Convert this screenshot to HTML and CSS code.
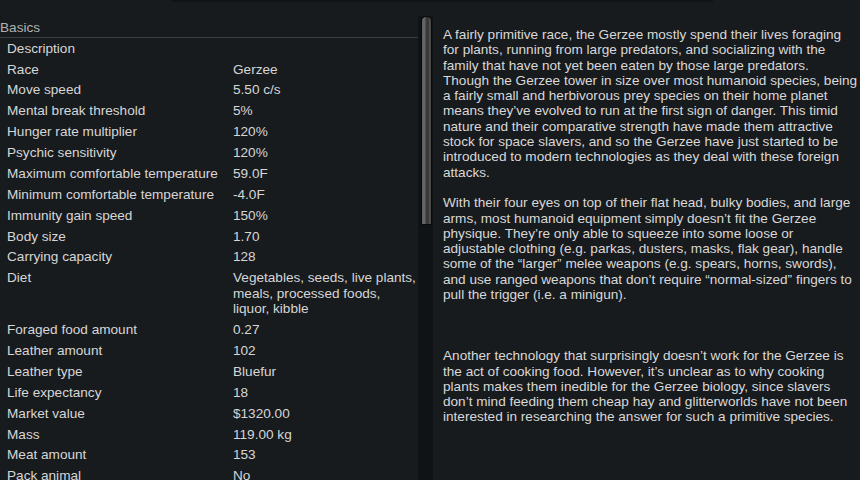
FILE: index.html
```html
<!DOCTYPE html>
<html>
<head>
<meta charset="utf-8">
<link rel="stylesheet" href="styles.css">
</head>
<body>
<div class="topstrip"></div>
<div class="main">
  <section class="stats">
    <div class="section-head">Basics</div>
    <div class="row"><span class="label">Description</span><span class="value"></span></div>
    <div class="row"><span class="label">Race</span><span class="value">Gerzee</span></div>
    <div class="row"><span class="label">Move speed</span><span class="value">5.50 c/s</span></div>
    <div class="row"><span class="label">Mental break threshold</span><span class="value">5%</span></div>
    <div class="row"><span class="label">Hunger rate multiplier</span><span class="value">120%</span></div>
    <div class="row"><span class="label">Psychic sensitivity</span><span class="value">120%</span></div>
    <div class="row"><span class="label">Maximum comfortable temperature</span><span class="value">59.0F</span></div>
    <div class="row"><span class="label">Minimum comfortable temperature</span><span class="value">-4.0F</span></div>
    <div class="row"><span class="label">Immunity gain speed</span><span class="value">150%</span></div>
    <div class="row"><span class="label">Body size</span><span class="value">1.70</span></div>
    <div class="row"><span class="label">Carrying capacity</span><span class="value">128</span></div>
    <div class="row"><span class="label">Diet</span><span class="value">Vegetables, seeds, live plants,<br>meals, processed foods,<br>liquor, kibble</span></div>
    <div class="row"><span class="label">Foraged food amount</span><span class="value">0.27</span></div>
    <div class="row"><span class="label">Leather amount</span><span class="value">102</span></div>
    <div class="row"><span class="label">Leather type</span><span class="value">Bluefur</span></div>
    <div class="row"><span class="label">Life expectancy</span><span class="value">18</span></div>
    <div class="row"><span class="label">Market value</span><span class="value">$1320.00</span></div>
    <div class="row"><span class="label">Mass</span><span class="value">119.00 kg</span></div>
    <div class="row"><span class="label">Meat amount</span><span class="value">153</span></div>
    <div class="row"><span class="label">Pack animal</span><span class="value">No</span></div>
  </section>
  <div class="track"><div class="thumb"></div></div>
  <section class="desc">
    <p>A fairly primitive race, the Gerzee mostly spend their lives foraging<br>for plants, running from large predators, and socializing with the<br>family that have not yet been eaten by those large predators.<br>Though the Gerzee tower in size over most humanoid species, being<br>a fairly small and herbivorous prey species on their home planet<br>means they’ve evolved to run at the first sign of danger. This timid<br>nature and their comparative strength have made them attractive<br>stock for space slavers, and so the Gerzee have just started to be<br>introduced to modern technologies as they deal with these foreign<br>attacks.</p>
    <p class="gap1">With their four eyes on top of their flat head, bulky bodies, and large<br>arms, most humanoid equipment simply doesn’t fit the Gerzee<br>physique. They’re only able to squeeze into some loose or<br>adjustable clothing (e.g. parkas, dusters, masks, flak gear), handle<br>some of the “larger” melee weapons (e.g. spears, horns, swords),<br>and use ranged weapons that don’t require “normal-sized” fingers to<br>pull the trigger (i.e. a minigun).</p>
    <p class="gap3">Another technology that surprisingly doesn’t work for the Gerzee is<br>the act of cooking food. However, it’s unclear as to why cooking<br>plants makes them inedible for the Gerzee biology, since slavers<br>don’t mind feeding them cheap hay and glitterworlds have not been<br>interested in researching the answer for such a primitive species.</p>
  </section>
</div>
</body>
</html>
```

FILE: styles.css
```css
html, body {
  margin: 0;
  padding: 0;
  width: 860px;
  height: 480px;
  overflow: hidden;
  background: #181b1e;
  font-family: "Liberation Sans", Arial, sans-serif;
  font-size: 13.6px;
  color: #d6d6d6;
}

.topstrip {
  height: 2px;
  width: 541px;
  margin-left: 172px;
  background: #101315;
}

.main {
  display: flex;
  height: 478px;
}

.stats {
  width: 418px;
  flex: none;
  padding-top: 17px;
}

.section-head {
  height: 18px;
  line-height: 18px;
  color: #b2b2b2;
  border-bottom: 1px solid #3a3e42;
}

.row {
  display: flex;
  padding: 2.7px 0 2.7px 7px;
  line-height: 15.5px;
}

.label {
  width: 226px;
  flex: none;
  white-space: nowrap;
}

.value {
  white-space: nowrap;
}

.track {
  width: 15px;
  flex: none;
  margin-top: 14px;
  background: #101315;
  box-sizing: border-box;
  padding-left: 3px;
}

.thumb {
  width: 11px;
  height: 209px;
  box-sizing: border-box;
  border: 1px solid #0a0a0a;
  border-radius: 5px 5px 1px 1px;
  background: linear-gradient(to right, #5e5e5e 0%, #6a6a6a 25%, #3a3a3a 50%, #333 65%, #555 90%, #3a3a3a 100%);
}

.desc {
  flex: 1;
  padding: 25px 0 0 10px;
  color: #d8d8d8;
  line-height: 15.3px;
  white-space: nowrap;
}

.desc p {
  margin: 0;
}

.desc p.gap1 {
  margin-top: 15.3px;
}

.desc p.gap3 {
  margin-top: 45.9px;
}
```
